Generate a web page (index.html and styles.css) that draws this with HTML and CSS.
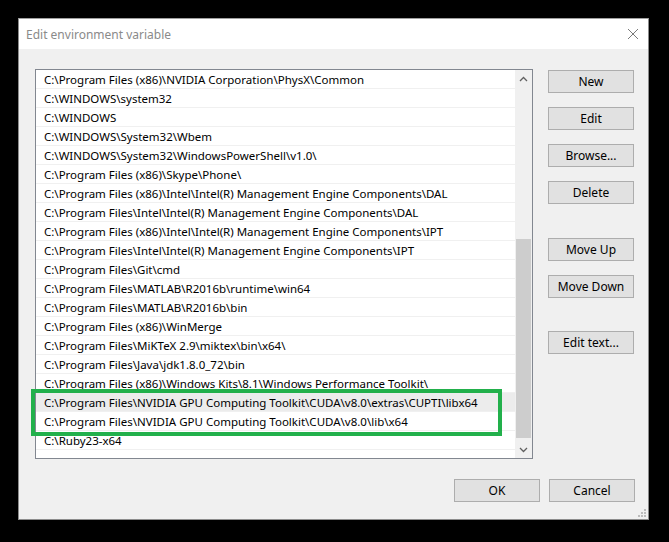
FILE: index.html
```html
<!DOCTYPE html>
<html lang="en">
<head>
  <meta charset="UTF-8">
  <title>Edit environment variable</title>
  <link rel="stylesheet" href="styles.css">
</head>
<body>
  <div class="window">
    <div class="titlebar">
      <span class="title">Edit environment variable</span>
      <svg class="close" width="12" height="12" viewBox="0 0 12 12">
        <path d="M1 1 L11 11 M11 1 L1 11" stroke="#7a7a7a" stroke-width="1" fill="none"/>
      </svg>
    </div>
    <div class="content">
      <div class="list">
        <div class="rows">
          <div class="row">C:\Program Files (x86)\NVIDIA Corporation\PhysX\Common</div>
          <div class="row">C:\WINDOWS\system32</div>
          <div class="row">C:\WINDOWS</div>
          <div class="row">C:\WINDOWS\System32\Wbem</div>
          <div class="row">C:\WINDOWS\System32\WindowsPowerShell\v1.0\</div>
          <div class="row">C:\Program Files (x86)\Skype\Phone\</div>
          <div class="row">C:\Program Files (x86)\Intel\Intel(R) Management Engine Components\DAL</div>
          <div class="row">C:\Program Files\Intel\Intel(R) Management Engine Components\DAL</div>
          <div class="row">C:\Program Files (x86)\Intel\Intel(R) Management Engine Components\IPT</div>
          <div class="row">C:\Program Files\Intel\Intel(R) Management Engine Components\IPT</div>
          <div class="row">C:\Program Files\Git\cmd</div>
          <div class="row">C:\Program Files\MATLAB\R2016b\runtime\win64</div>
          <div class="row">C:\Program Files\MATLAB\R2016b\bin</div>
          <div class="row">C:\Program Files (x86)\WinMerge</div>
          <div class="row">C:\Program Files\MiKTeX 2.9\miktex\bin\x64\</div>
          <div class="row">C:\Program Files\Java\jdk1.8.0_72\bin</div>
          <div class="row">C:\Program Files (x86)\Windows Kits\8.1\Windows Performance Toolkit\</div>
          <div class="row hover">C:\Program Files\NVIDIA GPU Computing Toolkit\CUDA\v8.0\extras\CUPTI\libx64</div>
          <div class="row">C:\Program Files\NVIDIA GPU Computing Toolkit\CUDA\v8.0\lib\x64</div>
          <div class="row">C:\Ruby23-x64</div>
        </div>
        <div class="scrollbar">
          <div class="arrow">
            <svg width="9" height="6" viewBox="0 0 9 6"><path d="M1 5 L4.5 1.5 L8 5" stroke="#606060" stroke-width="1.3" fill="none"/></svg>
          </div>
          <div class="track"><div class="thumb"></div></div>
          <div class="arrow">
            <svg width="9" height="6" viewBox="0 0 9 6"><path d="M1 1 L4.5 4.5 L8 1" stroke="#606060" stroke-width="1.3" fill="none"/></svg>
          </div>
        </div>
      </div>
      <div class="buttons">
        <button class="btn">New</button>
        <button class="btn">Edit</button>
        <button class="btn">Browse...</button>
        <button class="btn">Delete</button>
        <button class="btn group">Move Up</button>
        <button class="btn">Move Down</button>
        <button class="btn group">Edit text...</button>
      </div>
    </div>
    <div class="footer">
      <button class="btn">OK</button>
      <button class="btn">Cancel</button>
    </div>
    <div class="highlight"></div>
    <svg class="grip" width="10" height="10" viewBox="0 0 10 10">
      <rect x="8" y="2" width="2" height="2" fill="#bcbcbc"/>
      <rect x="5" y="5" width="2" height="2" fill="#bcbcbc"/>
      <rect x="8" y="5" width="2" height="2" fill="#bcbcbc"/>
      <rect x="2" y="8" width="2" height="2" fill="#bcbcbc"/>
      <rect x="5" y="8" width="2" height="2" fill="#bcbcbc"/>
      <rect x="8" y="8" width="2" height="2" fill="#bcbcbc"/>
    </svg>
  </div>
</body>
</html>
```

FILE: styles.css
```css
body {
  margin: 0;
  background: #000;
  font-family: 'Noto Sans', 'Liberation Sans', sans-serif;
  font-size: 12px;
  color: #000;
  height: 542px;
  overflow: hidden;
}
.window {
  position: relative;
  box-sizing: border-box;
  width: 631px;
  height: 502px;
  margin: 18px 0 0 18px;
  border: 1px solid #8c8c8c;
  border-top-color: #a0a0a0;
  background: #f0f0f0;
  display: flex;
  flex-direction: column;
}
.titlebar {
  height: 30px;
  background: #fff;
  display: flex;
  align-items: center;
  justify-content: space-between;
  padding: 0 9px 0 7px;
}
.title {
  color: #8a8a8a;
  font-size: 12px;
}
.close {
  display: block;
}
.content {
  display: flex;
  padding: 20px 13px 0 16px;
}
.list {
  box-sizing: border-box;
  width: 498px;
  height: 390px;
  border: 1px solid #828790;
  background: #fff;
  display: flex;
}
.rows {
  flex: 1;
}
.row {
  height: 17px;
  padding: 1px 0 0 8px;
  line-height: 18px;
  font-size: 11.5px;
  border-bottom: 1px solid #f0f0f0;
  white-space: nowrap;
  overflow: hidden;
}
.row.hover {
  background: #ececec;
}
.scrollbar {
  width: 17px;
  background: #f0f0f0;
  display: flex;
  flex-direction: column;
}
.arrow {
  height: 17px;
  display: flex;
  align-items: center;
  justify-content: center;
}
.track {
  flex: 1;
  padding-top: 152px;
}
.thumb {
  width: 15px;
  height: 199px;
  margin-left: 1px;
  background: #cdcdcd;
}
.buttons {
  display: flex;
  flex-direction: column;
  margin-left: 15px;
  padding-top: 1px;
}
.btn {
  box-sizing: border-box;
  width: 86px;
  height: 23px;
  margin: 0 0 14px 0;
  padding: 0;
  background: #e1e1e1;
  border: 1px solid #adadad;
  font-family: 'Noto Sans', 'Liberation Sans', sans-serif;
  font-size: 12px;
  color: #000;
}
.btn.group {
  margin-top: 20px;
}
.buttons .btn:nth-child(7) {
  margin-top: 19px;
}
.footer {
  display: flex;
  justify-content: flex-end;
  gap: 9px;
  padding: 20px 13px 0 0;
}
.footer .btn {
  margin: 0;
}
.highlight {
  position: absolute;
  left: 12px;
  top: 370px;
  box-sizing: border-box;
  width: 471px;
  height: 47px;
  border: 4px solid #22b04b;
}
.grip {
  position: absolute;
  right: 2px;
  bottom: 2px;
}
```
